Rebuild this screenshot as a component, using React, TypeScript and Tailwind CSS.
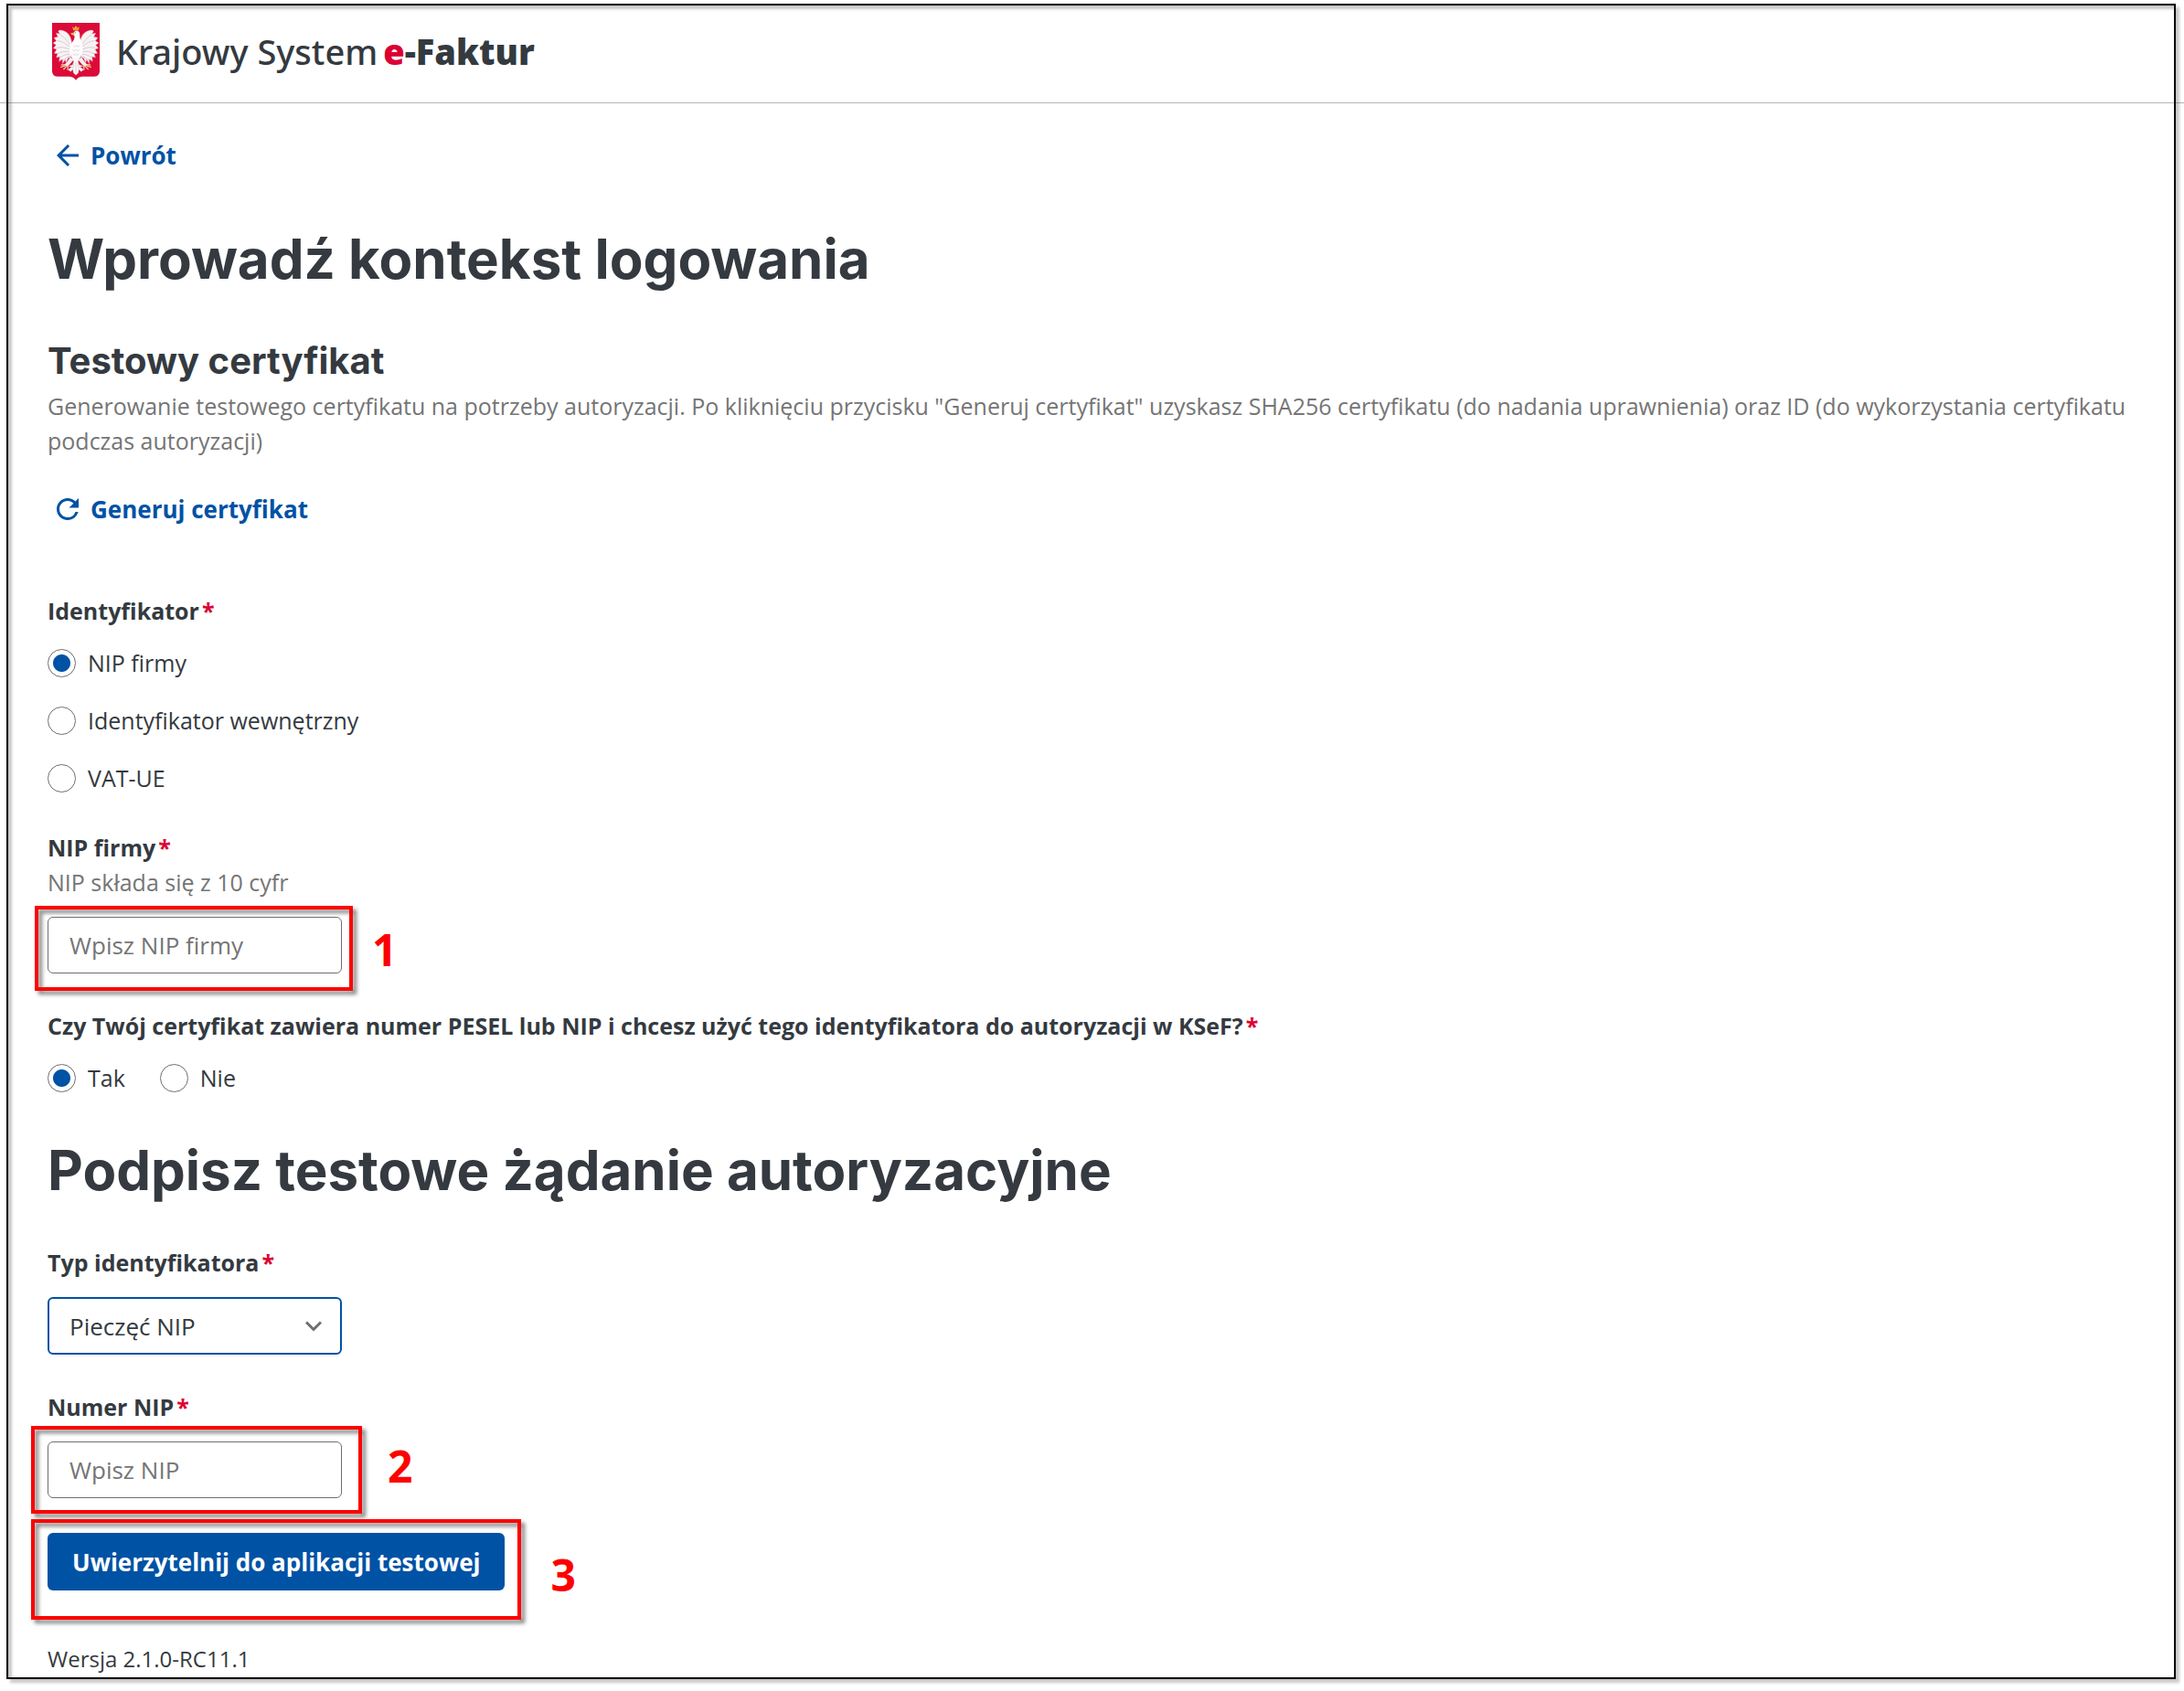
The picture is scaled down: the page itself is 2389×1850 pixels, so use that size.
import { useState } from "react";
import type { ReactNode } from "react";
import { MdArrowBack, MdRefresh } from "react-icons/md";

const identifierTypes = ["NIP firmy", "Identyfikator wewnętrzny", "VAT-UE"];

const inputClass =
    "block h-[62px] w-[322px] rounded-md border border-[#6f6f6f] bg-white px-[23px] text-[26px] text-[#343a40] placeholder:text-[#757575] placeholder:opacity-100";

function Emblem() {
    return (
        <svg viewBox="0 0 156 189" className="h-[63px] w-[52px]" aria-label="Godło Polski">
            <path d="M0 0H156V158Q156 176 136 176H98Q84 177 78 188Q72 177 58 176H20Q0 176 0 158Z" fill="#dc0a38" />
            {/* wings */}
            <g fill="#f6f3f4" stroke="#e2a9b8" strokeWidth="1.2">
                <path d="M65 78C66 56 58 38 46 30C36 24 24 22 20 27L25 36L13 34L19 46L6 49L14 59L3 66L13 73L4 83L15 87L7 100L18 101L14 114L25 111L23 127L34 119L34 134L43 121L46 131L52 116L61 112Z" />
                <path d="M91 78C90 56 98 38 110 30C120 24 132 22 136 27L131 36L143 34L137 46L150 49L142 59L153 66L143 73L152 83L141 87L149 100L138 101L142 114L131 111L133 127L122 119L122 134L113 121L110 131L104 116L95 112Z" />
            </g>
            <g fill="none" stroke="#c6b4bc" strokeWidth="1.8">
                <path d="M58 70Q42 48 26 38M58 78Q36 60 18 58M56 86Q34 76 15 82M56 94Q36 91 17 101M57 102Q40 104 26 113M57 108Q46 115 36 124" />
                <path d="M98 70Q114 48 130 38M98 78Q120 60 138 58M100 86Q122 76 141 82M100 94Q120 91 139 101M99 102Q116 104 130 113M99 108Q110 115 120 124" />
            </g>
            {/* tail, body and head */}
            <path
                d="M72 124L67 138L54 142L64 145L52 154L61 160L68 153L70 164L78 172L86 164L88 153L95 160L104 154L92 145L102 142L89 138L84 124Z"
                fill="#f8f6f7"
                stroke="#d8b8c3"
                strokeWidth="1"
            />
            <path d="M60 112L48 130L40 137L48 144L57 137L70 122ZM96 112L108 130L116 137L108 144L99 137L86 122Z" fill="#f3eef0" />
            <path
                d="M71 32Q75 24 84 26Q92 30 91 43Q90 52 96 61Q105 84 94 110L83 130H73L62 110Q52 84 66 63Q76 51 73 41L65 39L62 34Z"
                fill="#fdfcfc"
            />
            <path d="M70 73L75 79L80 73L85 79L90 73M66 87L72 93L78 87L84 93L90 87M68 101L73 107L78 101L83 107L88 101M78 130V164M72 133L67 151M84 133L89 151" fill="none" stroke="#cfc8ce" strokeWidth="2" />
            {/* gold parts */}
            <path d="M69 25L67 12L73 17L78 9L83 17L89 12L87 25ZM72 32L61 34L65 40L74 37Z" fill="#efb62d" />
            <path d="M69 21H87" stroke="#c47c1c" strokeWidth="2" />
            <path d="M41 137L31 138M42 141L29 145M46 144L38 152M52 141L51 153M115 137L125 138M114 141L127 145M110 144L118 152M104 141L105 153" fill="none" stroke="#f0c590" strokeWidth="4" strokeLinecap="round" />
            <circle cx="76" cy="32" r="1.5" fill="#55464a" />
        </svg>
    );
}

function Required() {
    return <span className="ml-[3px] text-[#dc0032]">*</span>;
}

function Radio({ name, label, checked, onChange }: { name: string; label: string; checked: boolean; onChange: () => void }) {
    return (
        <label className="flex h-[38px] items-center gap-[13px] leading-[38px]">
            <input
                type="radio"
                name={name}
                checked={checked}
                onChange={onChange}
                className="size-[31px] appearance-none rounded-full border border-[#6f6f6f] bg-white checked:bg-[radial-gradient(circle,#0052a5_9px,transparent_10px)]"
            />
            {label}
        </label>
    );
}

function Callout({ number, box, digit }: { number: number; box: string; digit: string }) {
    return (
        <>
            <div
                className={`pointer-events-none absolute border-4 border-[#ff0000] drop-shadow-[4px_4px_2px_rgba(0,0,0,0.5)] ${box}`}
            />
            <span className={`pointer-events-none absolute left-full text-5xl leading-[48px] font-bold text-[#ff0000] ${digit}`}>
                {number}
            </span>
        </>
    );
}

function Field({ id, label, hint, children }: { id: string; label: string; hint?: string; children: ReactNode }) {
    return (
        <div>
            <label htmlFor={id} className="block font-bold">
                {label}
                <Required />
            </label>
            {hint && <p className="text-[#757575]">{hint}</p>}
            <div className="relative mt-[19px] w-fit">{children}</div>
        </div>
    );
}

export default function App() {
    const [identifier, setIdentifier] = useState(identifierTypes[0]);
    const [usesCertificateId, setUsesCertificateId] = useState(true);

    return (
        <div className="relative min-h-screen bg-white pb-[17px] font-['Open_Sans',sans-serif] text-[25px] leading-[38px] text-[#343a40]">
            <header className="flex h-[113px] items-center gap-[18px] border-b border-[#b5b5b5] px-[57px]">
                <Emblem />
                <div className="flex gap-[6px] font-['Noto_Sans',sans-serif] text-[38px]">
                    <span className="font-medium">Krajowy System</span>
                    <span className="font-black">
                        <span className="text-[#dc0032]">e</span>-Faktur
                    </span>
                </div>
            </header>

            <main className="px-[52px] pt-[38px]">
                <a href="#" className="flex w-fit items-center gap-[7px] pl-1 text-[26px] font-bold text-[#0052a5]">
                    <MdArrowBack className="size-9" />
                    Powrót
                </a>

                <h1 className="mt-[62px] font-['Inter',sans-serif] text-[60px] leading-[64px] font-bold">
                    Wprowadź kontekst logowania
                </h1>

                <h2 className="mt-[56px] font-['Inter',sans-serif] text-[40px] leading-[48px] font-bold">Testowy certyfikat</h2>
                <p className="mt-[6px] text-[#757575]">
                    Generowanie testowego certyfikatu na potrzeby autoryzacji. Po kliknięciu przycisku "Generuj certyfikat"
                    uzyskasz SHA256 certyfikatu (do nadania uprawnienia) oraz ID (do wykorzystania certyfikatu podczas
                    autoryzacji)
                </p>
                <button type="button" className="mt-[37px] flex items-center gap-[7px] pl-1 text-[26px] font-bold text-[#0052a5]">
                    <MdRefresh className="size-9" />
                    Generuj certyfikat
                </button>

                <form className="mt-[73px] flex flex-col gap-[38px]" onSubmit={(e) => e.preventDefault()}>
                    <fieldset>
                        <legend className="font-bold">
                            Identyfikator
                            <Required />
                        </legend>
                        <div className="mt-[19px] flex flex-col gap-[25px]">
                            {identifierTypes.map((type) => (
                                <Radio
                                    key={type}
                                    name="identifier"
                                    label={type}
                                    checked={identifier === type}
                                    onChange={() => setIdentifier(type)}
                                />
                            ))}
                        </div>
                    </fieldset>

                    <Field id="company-nip" label="NIP firmy" hint="NIP składa się z 10 cyfr">
                        <input id="company-nip" className={inputClass} placeholder="Wpisz NIP firmy" />
                        <Callout number={1} box="-top-3 -right-3 -bottom-[19px] -left-3.5" digit="top-3 ml-[33px]" />
                    </Field>

                    <fieldset>
                        <legend className="font-bold">
                            Czy Twój certyfikat zawiera numer PESEL lub NIP i chcesz użyć tego identyfikatora do autoryzacji w
                            KSeF?
                            <Required />
                        </legend>
                        <div className="mt-[19px] flex gap-[38px]">
                            <Radio
                                name="certificate-id"
                                label="Tak"
                                checked={usesCertificateId}
                                onChange={() => setUsesCertificateId(true)}
                            />
                            <Radio
                                name="certificate-id"
                                label="Nie"
                                checked={!usesCertificateId}
                                onChange={() => setUsesCertificateId(false)}
                            />
                        </div>
                    </fieldset>

                    <h1 className="my-[12px] font-['Inter',sans-serif] text-[60px] leading-[64px] font-bold">
                        Podpisz testowe żądanie autoryzacyjne
                    </h1>

                    <Field id="identifier-kind" label="Typ identyfikatora">
                        <select
                            id="identifier-kind"
                            className="block h-[63px] w-[322px] appearance-none rounded-md border-2 border-[#0052a5] bg-white px-[22px] text-[26px] text-[#343a40]"
                        >
                            <option>Pieczęć NIP</option>
                            <option>PESEL</option>
                        </select>
                        <svg
                            viewBox="0 0 18 12"
                            className="pointer-events-none absolute top-[26px] right-[22px] h-3 w-[18px]"
                            fill="none"
                            stroke="#6f6f6f"
                            strokeWidth="3"
                        >
                            <path d="M1 1.5L9 9.5L17 1.5" />
                        </svg>
                    </Field>

                    <Field id="nip-number" label="Numer NIP">
                        <input id="nip-number" className={inputClass} placeholder="Wpisz NIP" />
                        <Callout number={2} box="-top-[17px] -right-5.5 -bottom-[17px] -left-4.5" digit="top-[3px] ml-[50px]" />
                    </Field>

                    <div className="relative w-fit">
                        <button type="submit" className="h-[63px] rounded-md bg-[#0052a5] px-[27px] text-[26px] font-bold text-white">
                            Uwierzytelnij do aplikacji testowej
                        </button>
                        <Callout number={3} box="-top-[15px] -right-4.5 -bottom-8 -left-4.5" digit="top-[22px] ml-[50px]" />
                    </div>
                </form>
            </main>

            <footer className="mt-[57px] px-[52px] text-2xl leading-[36px]">Wersja 2.1.0-RC11.1</footer>

            {/* frame around the whole view */}
            <div className="pointer-events-none absolute top-1 right-[9px] bottom-[13px] left-[7px] border-2 border-black shadow-[inset_4px_4px_3px_rgba(0,0,0,0.22),4px_4px_3px_rgba(0,0,0,0.22)]" />
        </div>
    );
}
